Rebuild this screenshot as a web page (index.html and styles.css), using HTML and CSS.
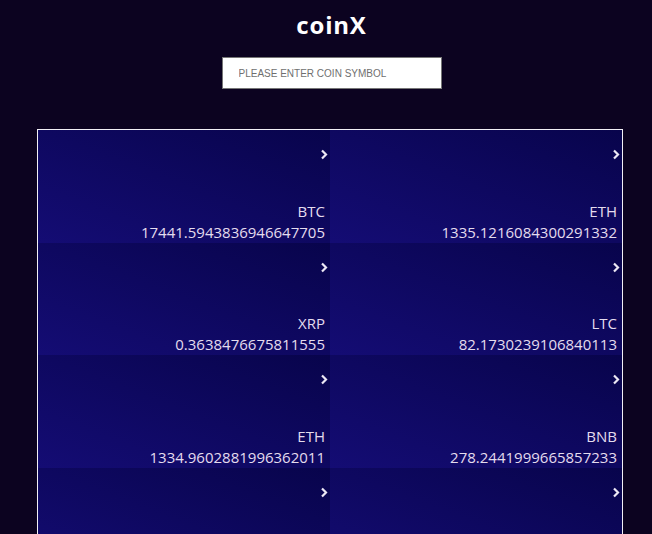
FILE: index.html
```html
<!DOCTYPE html>
<html>
<head>
<meta charset="utf-8">
<link rel="stylesheet" href="styles.css">
</head>
<body>
<header class="top">
  <h1 class="brand">coinX</h1>
  <input class="search" type="text" placeholder="PLEASE ENTER COIN SYMBOL">
</header>
<main class="board">
  <div class="card"><span class="chev"><svg width="8" height="11" viewBox="0 0 8 11"><polyline points="2,1.5 6,5.5 2,9.5" fill="none" stroke="#ece8f4" stroke-width="2.2"/></svg></span><div class="info"><div class="sym">BTC</div><div class="price">17441.5943836946647705</div></div></div>
  <div class="card"><span class="chev"><svg width="8" height="11" viewBox="0 0 8 11"><polyline points="2,1.5 6,5.5 2,9.5" fill="none" stroke="#ece8f4" stroke-width="2.2"/></svg></span><div class="info"><div class="sym">ETH</div><div class="price">1335.1216084300291332</div></div></div>
  <div class="card"><span class="chev"><svg width="8" height="11" viewBox="0 0 8 11"><polyline points="2,1.5 6,5.5 2,9.5" fill="none" stroke="#ece8f4" stroke-width="2.2"/></svg></span><div class="info"><div class="sym">XRP</div><div class="price">0.3638476675811555</div></div></div>
  <div class="card"><span class="chev"><svg width="8" height="11" viewBox="0 0 8 11"><polyline points="2,1.5 6,5.5 2,9.5" fill="none" stroke="#ece8f4" stroke-width="2.2"/></svg></span><div class="info"><div class="sym">LTC</div><div class="price">82.1730239106840113</div></div></div>
  <div class="card"><span class="chev"><svg width="8" height="11" viewBox="0 0 8 11"><polyline points="2,1.5 6,5.5 2,9.5" fill="none" stroke="#ece8f4" stroke-width="2.2"/></svg></span><div class="info"><div class="sym">ETH</div><div class="price">1334.9602881996362011</div></div></div>
  <div class="card"><span class="chev"><svg width="8" height="11" viewBox="0 0 8 11"><polyline points="2,1.5 6,5.5 2,9.5" fill="none" stroke="#ece8f4" stroke-width="2.2"/></svg></span><div class="info"><div class="sym">BNB</div><div class="price">278.2441999665857233</div></div></div>
  <div class="card"><span class="chev"><svg width="8" height="11" viewBox="0 0 8 11"><polyline points="2,1.5 6,5.5 2,9.5" fill="none" stroke="#ece8f4" stroke-width="2.2"/></svg></span><div class="info"><div class="sym">DOGE</div><div class="price">0.0764210935127733</div></div></div>
  <div class="card"><span class="chev"><svg width="8" height="11" viewBox="0 0 8 11"><polyline points="2,1.5 6,5.5 2,9.5" fill="none" stroke="#ece8f4" stroke-width="2.2"/></svg></span><div class="info"><div class="sym">ADA</div><div class="price">0.3121554076218810</div></div></div>
</main>
</body>
</html>
```

FILE: styles.css
```css
html, body {
  margin: 0;
  padding: 0;
}
body {
  background: #0c0320;
  font-family: "Open Sans", "DejaVu Sans", sans-serif;
  color: #e4dcee;
  padding: 0 29px 0 37px;
}
.top {
  display: flex;
  flex-direction: column;
  align-items: center;
  padding: 8px 0 0 3px;
}
.brand {
  margin: 0;
  font-size: 24px;
  line-height: 33px;
  font-weight: 700;
  color: #ffffff;
  letter-spacing: 0.8px;
}
.search {
  margin-top: 16px;
  box-sizing: border-box;
  width: 220px;
  height: 32px;
  border: 1px solid #767676;
  background: #ffffff;
  padding: 0 0 0 16px;
  font-family: "Liberation Sans", Arial, sans-serif;
  font-size: 10px;
  outline: none;
}
.search::placeholder {
  color: #6f6f6f;
}
.board {
  margin-top: 40px;
  border: 1px solid #f2f0f6;
  display: grid;
  grid-template-columns: 1fr 1fr;
  grid-auto-rows: 112.5px;
}
.card {
  display: flex;
  flex-direction: column;
  justify-content: space-between;
  align-items: flex-end;
  padding: 19px 2px 0 0;
  background: linear-gradient(to top right, #140c74, #08044c);
}
.chev {
  display: block;
  width: 8px;
  height: 11px;
}
.chev svg {
  display: block;
}
.info {
  text-align: right;
  padding-right: 3px;
  font-size: 15px;
  line-height: 21px;
}
```
